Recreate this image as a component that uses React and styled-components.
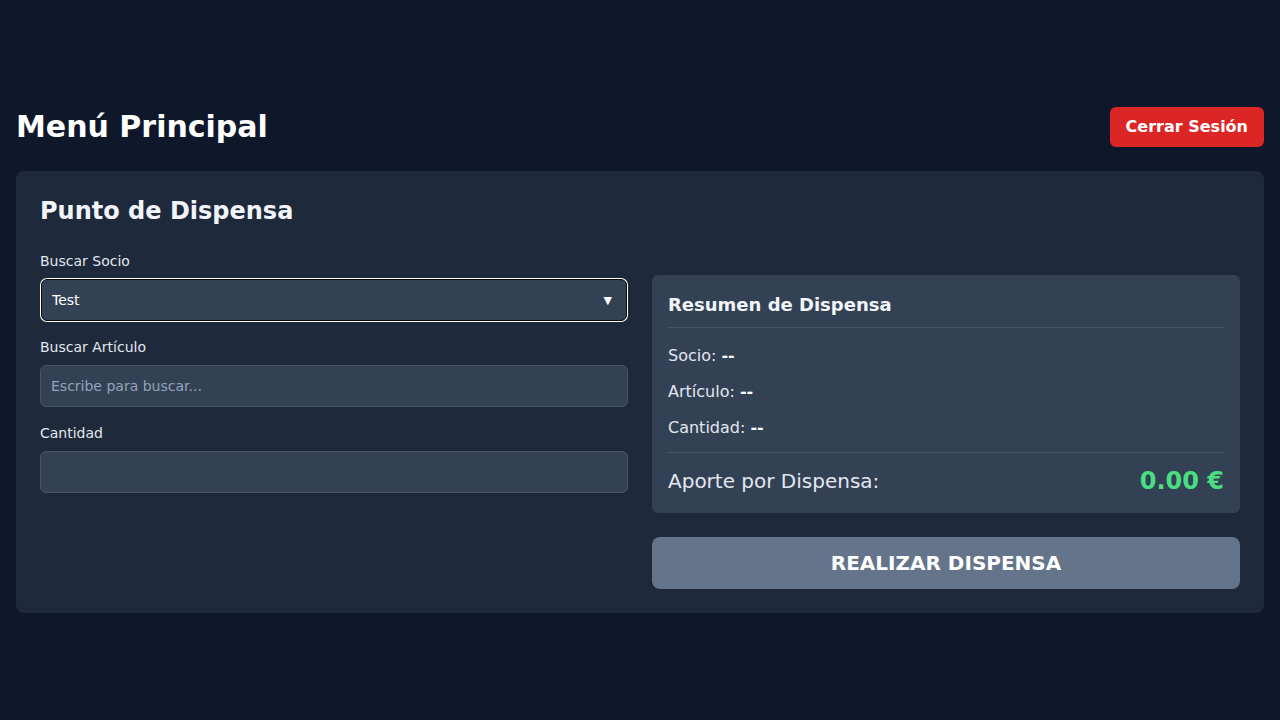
import React, { useState } from "react";
import styled, { createGlobalStyle } from "styled-components";

const GlobalStyle = createGlobalStyle`
  * { box-sizing: border-box; }
  html, body { margin: 0; padding: 0; }
  body {
    background: #0f172a;
    color: #f1f5f9;
    font-family: "DejaVu Sans", "Liberation Sans", sans-serif;
  }
`;

export default function App() {
  const [socio, setSocio] = useState("test");
  const [articulo, setArticulo] = useState("");
  const [cantidad, setCantidad] = useState("");

  return (
    <Page>
      <GlobalStyle />
      <Wrapper>
        <Header>
          <Title>Menú Principal</Title>
          <LogoutButton>Cerrar Sesión</LogoutButton>
        </Header>
        <Card>
          <CardTitle>Punto de Dispensa</CardTitle>
          <Grid>
            <Column>
              <Field>
                <Label>Buscar Socio</Label>
                <SelectWrap>
                  <Select value={socio} onChange={(e) => setSocio(e.target.value)}>
                    <option value="test">Test</option>
                  </Select>
                  <Arrow>▼</Arrow>
                </SelectWrap>
              </Field>
              <Field>
                <Label>Buscar Artículo</Label>
                <Input
                  placeholder="Escribe para buscar..."
                  value={articulo}
                  onChange={(e) => setArticulo(e.target.value)}
                />
              </Field>
              <Field>
                <Label>Cantidad</Label>
                <Input
                  type="number"
                  value={cantidad}
                  onChange={(e) => setCantidad(e.target.value)}
                />
              </Field>
            </Column>
            <SideColumn>
              <Summary>
                <SummaryTitle>Resumen de Dispensa</SummaryTitle>
                <SummaryList>
                  <SummaryItem>
                    Socio: <strong>--</strong>
                  </SummaryItem>
                  <SummaryItem>
                    Artículo: <strong>--</strong>
                  </SummaryItem>
                  <SummaryItem>
                    Cantidad: <strong>--</strong>
                  </SummaryItem>
                </SummaryList>
                <TotalRow>
                  <TotalLabel>Aporte por Dispensa:</TotalLabel>
                  <TotalValue>0.00 €</TotalValue>
                </TotalRow>
              </Summary>
              <SubmitButton>REALIZAR DISPENSA</SubmitButton>
            </SideColumn>
          </Grid>
        </Card>
      </Wrapper>
    </Page>
  );
}

const Page = styled.div`
  min-height: 100vh;
  display: flex;
  align-items: center;
  padding: 16px;
`;

const Wrapper = styled.div`
  width: 100%;
`;

const Header = styled.div`
  display: flex;
  align-items: center;
  justify-content: space-between;
  margin-bottom: 24px;
`;

const Title = styled.h1`
  margin: 0;
  font-size: 30px;
  line-height: 36px;
  font-weight: 700;
  color: #ffffff;
`;

const LogoutButton = styled.button`
  border: none;
  background: #dc2626;
  color: #ffffff;
  font-family: inherit;
  font-size: 16px;
  font-weight: 700;
  line-height: 24px;
  padding: 8px 16px;
  border-radius: 6px;
  cursor: pointer;
`;

const Card = styled.div`
  background: #1e293b;
  border-radius: 8px;
  padding: 24px;
`;

const CardTitle = styled.h2`
  margin: 0 0 24px;
  font-size: 24px;
  line-height: 32px;
  font-weight: 700;
  color: #f1f5f9;
`;

const Grid = styled.div`
  display: grid;
  grid-template-columns: 1fr 1fr;
  gap: 24px;
  align-items: start;
`;

const Column = styled.div`
  display: flex;
  flex-direction: column;
  gap: 16px;
`;

const SideColumn = styled.div`
  display: flex;
  flex-direction: column;
  gap: 24px;
  padding-top: 24px;
`;

const Field = styled.div`
  display: flex;
  flex-direction: column;
`;

const Label = styled.label`
  font-size: 14px;
  line-height: 20px;
  color: #e2e8f0;
  margin-bottom: 8px;
`;

const SelectWrap = styled.div`
  position: relative;
`;

const Select = styled.select`
  appearance: none;
  height: 42px;
  background: #334155;
  color: #ffffff;
  font-family: inherit;
  font-size: 14px;
  padding: 0 10px;
  border: 1px solid #0b0b0b;
  border-radius: 6px;
  box-shadow: 0 0 0 1px #ffffff;
  margin: 0 1px;
  width: calc(100% - 2px);
  outline: none;
`;

const Arrow = styled.span`
  position: absolute;
  right: 16px;
  top: 50%;
  transform: translateY(-50%);
  font-size: 11px;
  color: #ffffff;
  pointer-events: none;
`;

const Input = styled.input`
  width: 100%;
  height: 42px;
  background: #334155;
  color: #ffffff;
  font-family: inherit;
  font-size: 14px;
  padding: 0 10px;
  border: 1px solid #475569;
  border-radius: 6px;
  outline: none;
  -moz-appearance: textfield;

  &::placeholder {
    color: #94a3b8;
  }
  &::-webkit-outer-spin-button,
  &::-webkit-inner-spin-button {
    -webkit-appearance: none;
    margin: 0;
  }
`;

const Summary = styled.div`
  background: #334155;
  border-radius: 6px;
  padding: 16px;
`;

const SummaryTitle = styled.h3`
  margin: 0 0 16px;
  padding-bottom: 8px;
  border-bottom: 1px solid #475569;
  font-size: 18px;
  line-height: 28px;
  font-weight: 700;
  color: #f1f5f9;
`;

const SummaryList = styled.div`
  display: flex;
  flex-direction: column;
  gap: 12px;
`;

const SummaryItem = styled.div`
  font-size: 16px;
  line-height: 24px;
  color: #e2e8f0;

  strong {
    color: #ffffff;
    font-weight: 700;
  }
`;

const TotalRow = styled.div`
  display: flex;
  align-items: center;
  justify-content: space-between;
  margin-top: 12px;
  padding-top: 12px;
  border-top: 1px solid #475569;
`;

const TotalLabel = styled.span`
  font-size: 20px;
  line-height: 28px;
  color: #e2e8f0;
`;

const TotalValue = styled.span`
  font-size: 24px;
  line-height: 32px;
  font-weight: 700;
  color: #4ade80;
`;

const SubmitButton = styled.button`
  width: 100%;
  height: 52px;
  border: none;
  border-radius: 8px;
  background: #64748b;
  color: #ffffff;
  font-family: inherit;
  font-size: 20px;
  font-weight: 700;
  cursor: not-allowed;
`;
